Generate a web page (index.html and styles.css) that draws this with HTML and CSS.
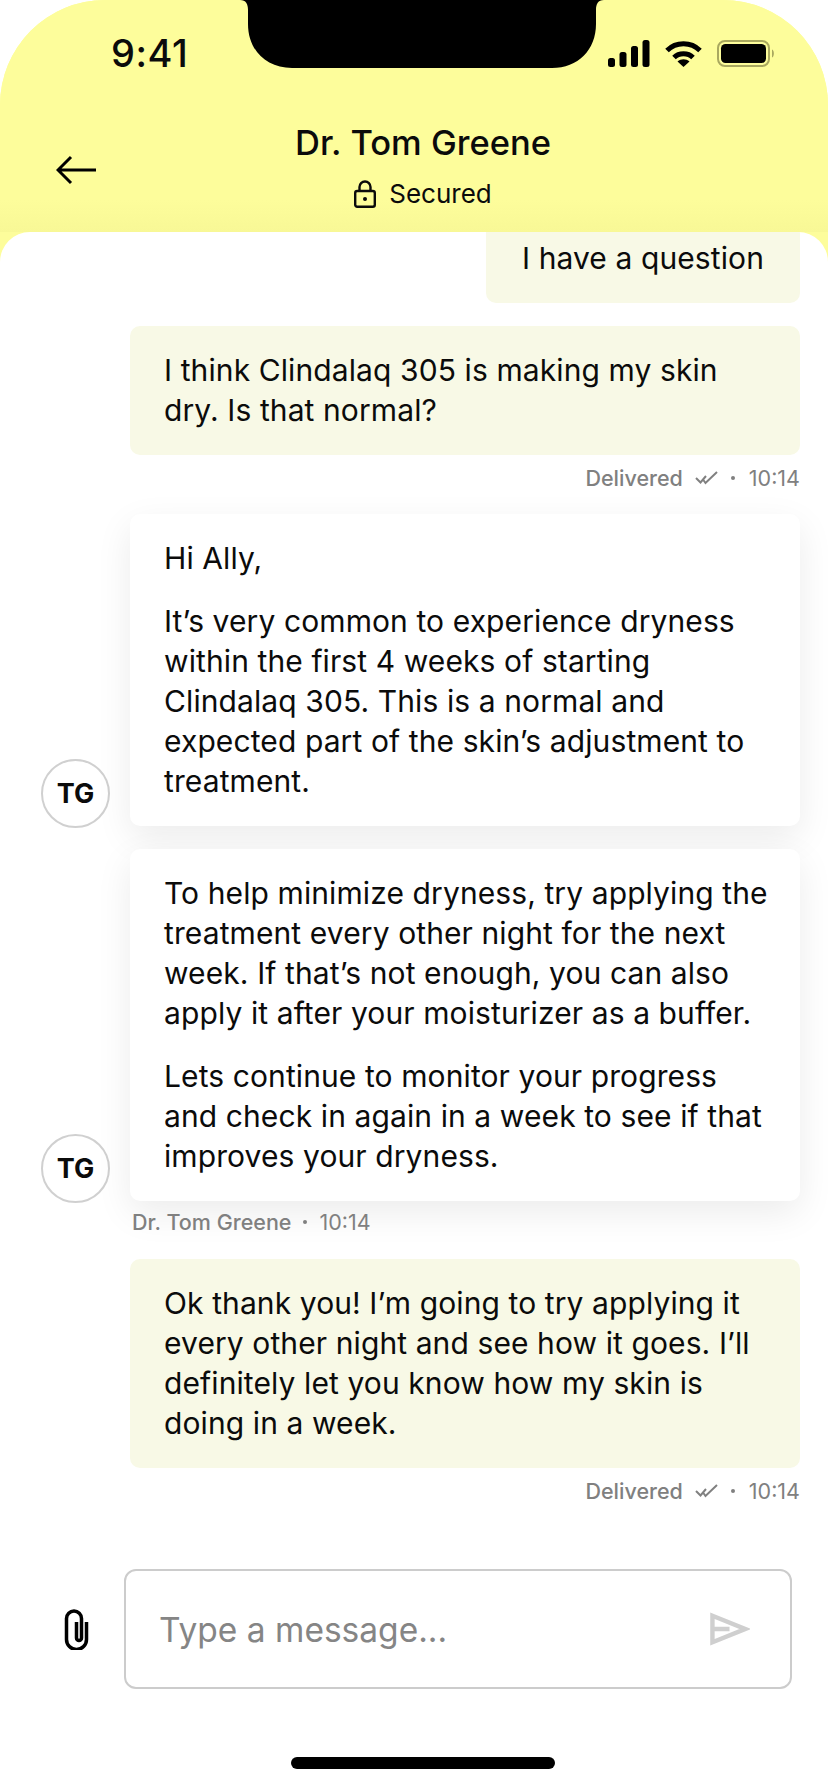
FILE: index.html
```html
<!DOCTYPE html>
<html lang="en">
<head>
<meta charset="utf-8">
<title>Dr. Tom Greene</title>
<link rel="stylesheet" href="styles.css">
</head>
<body>
<div class="screen">
  <svg class="notch" viewBox="0 0 364 68" aria-hidden="true"><path d="M0 0H364C358 0 356 4 356 10V24C356 50 338 68 312 68H52C26 68 8 50 8 24V10C8 4 6 0 0 0Z"/></svg>
  <header class="header">
    <div class="status">
      <span class="clock">9:41</span>
      <div class="status-icons">
        <svg class="signal" viewBox="0 0 42 27"><rect x="0" y="18" width="7" height="9" rx="2.5"/><rect x="11.5" y="12" width="7" height="15" rx="2.5"/><rect x="23" y="6" width="7" height="21" rx="2.5"/><rect x="34.5" y="0" width="7" height="27" rx="2.5"/></svg>
        <svg class="wifi" viewBox="0 0 37 27"><path class="wifi-arc" d="M2 10.5C11 1.5 26 1.5 35 10.5"/><path class="wifi-arc" d="M9 17.5C14 12.5 23 12.5 28 17.5"/><path d="M12.5 21.500C16 18.500 21 18.500 24.500 21.500L18.500 27Z"/></svg>
        <svg class="battery" viewBox="0 0 58 27"><rect class="battery-case" x="1" y="1" width="51" height="25" rx="7"/><rect x="4" y="4" width="45" height="19" rx="4.500"/><path class="battery-tip" d="M55 9.500C57.500 10.500 57.500 16.500 55 17.500Z"/></svg>
      </div>
    </div>
    <div class="nav">
      <svg class="back" viewBox="0 0 41 30"><path d="M15 2L2 15L15 28M2 15H40"/></svg>
      <div class="nav-title">
        <h1 class="name">Dr. Tom Greene</h1>
        <div class="secured">
          <svg class="lock" viewBox="0 0 22 28"><path d="M5.500 11V7a5.500 5.500 0 0 1 11 0v4"/><rect x="1.200" y="11" width="19.600" height="15.800" rx="2"/><circle class="lock-dot" cx="11" cy="19" r="2"/></svg>
          <span>Secured</span>
        </div>
      </div>
    </div>
  </header>
  <main class="sheet">
    <section class="chat">
      <div class="bubble mine clipped">I have a question</div>
      <div class="bubble mine wide">I think Clindalaq 305 is making my skin<br>dry. Is that normal?</div>
      <div class="meta end">
        <span class="meta-label">Delivered</span>
        <svg class="ticks" viewBox="0 0 24 14"><path d="M1 7L5.500 11.500L11 5M8 8.500L10.500 12L22 1"/></svg>
        <i class="dot"></i>
        <span>10:14</span>
      </div>
      <div class="row first">
        <div class="avatar">TG</div>
        <div class="bubble theirs">
          <p>Hi Ally,</p>
          <p>It’s very common to experience dryness<br>within the first 4 weeks of starting<br>Clindalaq 305. This is a normal and<br>expected part of the skin’s adjustment to<br>treatment.</p>
        </div>
      </div>
      <div class="row second">
        <div class="avatar">TG</div>
        <div class="bubble theirs">
          <p>To help minimize dryness, try applying the<br>treatment every other night for the next<br>week. If that’s not enough, you can also<br>apply it after your moisturizer as a buffer.</p>
          <p>Lets continue to monitor your progress<br>and check in again in a week to see if that<br>improves your dryness.</p>
        </div>
      </div>
      <div class="meta start">
        <span class="meta-label">Dr. Tom Greene</span>
        <i class="dot"></i>
        <span>10:14</span>
      </div>
      <div class="bubble mine wide last">Ok thank you! I’m going to try applying it<br>every other night and see how it goes. I’ll<br>definitely let you know how my skin is<br>doing in a week.</div>
      <div class="meta end">
        <span class="meta-label">Delivered</span>
        <svg class="ticks" viewBox="0 0 24 14"><path d="M1 7L5.500 11.500L11 5M8 8.500L10.500 12L22 1"/></svg>
        <i class="dot"></i>
        <span>10:14</span>
      </div>
    </section>
    <footer class="composer">
      <svg class="clip" viewBox="0 0 25 41"><path d="M22.500 13V30.500a10 10 0 0 1-20 0V9.500a7.500 7.500 0 0 1 15 0V29a2.500 2.500 0 0 1-5 0V13"/></svg>
      <div class="input">
        <span class="placeholder">Type a message...</span>
        <svg class="send" viewBox="0 0 41 34"><path d="M2.500 3.500L36 17L2.500 30.500ZM2.500 17H20"/></svg>
      </div>
    </footer>
    <div class="home"></div>
  </main>
</div>
</body>
</html>
```
FILE: styles.css
```css
* { box-sizing: border-box; }
html, body { margin: 0; background: #fff; }
body { font-family: Inter, "Liberation Sans", sans-serif; color: #0b0b0b; }
.screen {
  position: relative;
  width: 828px;
  height: 1788px;
  display: flex;
  flex-direction: column;
  overflow: hidden;
  background: #fdfd9b;
  border-radius: 105px 105px 0 0;
}
.notch { position: absolute; top: 0; left: 240px; width: 364px; height: 68px; fill: #000; }
.header { height: 232px; flex: none; padding-top: 40px; background: linear-gradient(#fdfd9b 200px, #f8f896 232px); }
.status { display: flex; justify-content: space-between; align-items: center; height: 27px; padding: 0 53px 0 111px; }
.clock { font-size: 38px; font-weight: 500; letter-spacing: 0.500px; line-height: 27px; }
.status-icons { display: flex; align-items: center; gap: 15px; }
.signal { width: 42px; height: 27px; fill: #000; }
.wifi { width: 37px; height: 27px; fill: #000; }
.wifi-arc { fill: none; stroke: #000; stroke-width: 5; }
.battery { width: 58px; height: 27px; fill: #000; }
.battery-case { fill: none; stroke: #a9a85f; stroke-width: 2; }
.battery-tip { fill: #a9a85f; }
.nav { position: relative; display: flex; justify-content: center; margin-top: 56px; padding-left: 18px; }
.back { position: absolute; left: 56px; top: 32px; width: 41px; height: 30px; fill: none; stroke: #000; stroke-width: 3; }
.nav-title { display: flex; flex-direction: column; align-items: center; }
.name { margin: 0; font-size: 34.500px; font-weight: 500; line-height: 40px; }
.secured { display: flex; align-items: center; gap: 13px; margin-top: 15px; font-size: 26px; line-height: 32px; }
.lock { width: 22px; height: 28px; fill: none; stroke: #0b0b0b; stroke-width: 2.400; }
.lock-dot { fill: #0b0b0b; stroke: none; }
.sheet {
  flex: 1;
  display: flex;
  flex-direction: column;
  overflow: hidden;
  background: #fff;
  border-radius: 30px 30px 0 0;
}
.chat { display: flex; flex-direction: column; padding: 0 28px 0 41px; }
.bubble { font-size: 30px; letter-spacing: 0.100px; line-height: 40px; padding: 24px 10px 25px 34px; border-radius: 10px; white-space: nowrap; }
.mine { background: #f8f9e6; }
.clipped { align-self: flex-end; padding: 6px 36px 25px; border-radius: 0 0 10px 10px; }
.wide { margin-left: 89px; margin-top: 23px; }
.last { margin-top: 23px; }
.theirs { flex: 1; background: #fff; box-shadow: 0 12px 36px rgba(0, 0, 0, 0.08); }
.theirs p { margin: 0 0 23px; }
.theirs p:last-child { margin-bottom: 0; }
.meta { display: flex; align-items: center; gap: 12px; height: 28px; margin-top: 9px; font-size: 21.500px; color: #808080; }
.meta-label { font-weight: 500; }
.end { justify-content: flex-end; }
.start { margin-left: 91px; margin-top: 7px; gap: 11px; }
.ticks { width: 24px; height: 14px; fill: none; stroke: #808080; stroke-width: 2; }
.dot { width: 4px; height: 4px; border-radius: 50%; background: #808080; margin-right: 2px; }
.row { display: flex; align-items: flex-end; gap: 20px; }
.first { margin-top: 22px; }
.second { margin-top: 23px; }
.avatar {
  flex: none;
  width: 69px;
  height: 69px;
  margin-bottom: -2px;
  display: flex;
  align-items: center;
  justify-content: center;
  border: 2px solid #d0d0d0;
  border-radius: 50%;
  background: #fff;
  font-size: 27px;
  font-weight: 700;
}
.composer { display: flex; align-items: center; gap: 35px; margin-top: auto; padding: 0 36px 0 64px; }
.clip { flex: none; width: 25px; height: 41px; fill: none; stroke: #000; stroke-width: 3.500; }
.input {
  flex: 1;
  height: 120px;
  display: flex;
  align-items: center;
  justify-content: space-between;
  padding: 0 40px 0 33px;
  border: 2px solid #ccc;
  border-radius: 12px;
}
.placeholder { font-size: 33.500px; color: #858585; position: relative; top: 1px; }
.send { width: 40px; height: 34px; fill: none; stroke: #cfcfcf; stroke-width: 4.500; }
.home { flex: none; width: 264px; height: 12px; margin: 68px 0 19px 291px; border-radius: 6px; background: #000; }
```
